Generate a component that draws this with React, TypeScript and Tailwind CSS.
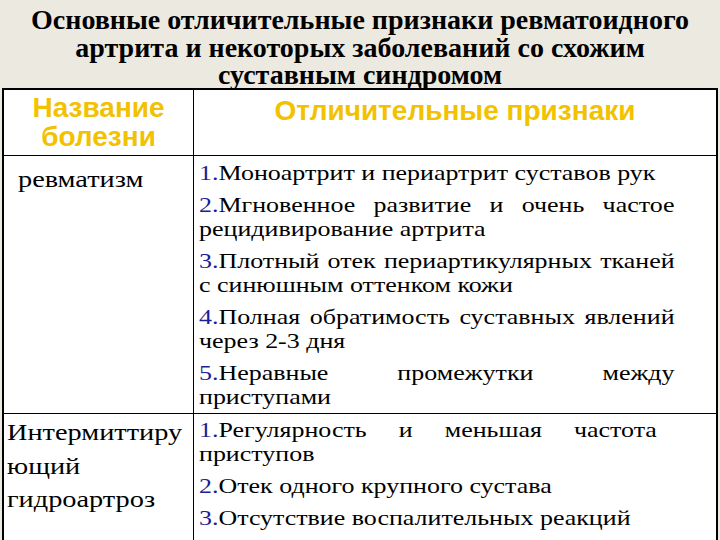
import React from 'react';

const SERIF = "'Liberation Serif', 'Times New Roman', serif";
const SANS = "'Liberation Sans', Arial, sans-serif";

export default function App() {
  return (
    <div
      className="w-[720px] h-[540px] overflow-hidden bg-[#ece9e0] text-black font-['Liberation_Serif']"
      style={{ fontFamily: SERIF }}
    >
      <div className="pt-[6px] h-[88px] text-center text-[28px] leading-[27.5px] font-bold">
        <div>Основные отличительные признаки ревматоидного</div>
        <div>артрита и некоторых заболеваний со схожим</div>
        <div>суставным синдромом</div>
      </div>

      <div className="ml-[2px] w-[716px] border-2 border-b-0 border-black bg-white">
        <div
          className="grid grid-cols-[190px_1fr] h-[66px] border-b border-black font-bold text-[#f2c200] text-[28px] leading-[29px] font-['Liberation_Sans']"
          style={{ fontFamily: SANS }}
        >
          <div className="border-r border-black pt-[3px] text-center">
            <div>Название</div>
            <div>болезни</div>
          </div>
          <div className="pt-[6px] text-center">Отличительные признаки</div>
        </div>

        <div className="grid grid-cols-[190px_1fr] border-b border-black">
          <div className="border-r border-black pl-[14px] pt-[7px] text-[24px] leading-[33px]">
            <div className="origin-left scale-x-[1.18]">ревматизм</div>
          </div>
          <div className="pl-[5px] pt-[5px] pb-[4px] text-[22px] leading-[24px]">
            <div className="w-[403px] origin-left scale-x-[1.18] flex flex-col gap-[8px]">
              <div>
                <span className="text-[#1d1d96]">1.</span>Моноартрит и периартрит суставов рук
              </div>
              <div>
                <div className="text-justify [text-align-last:justify]">
                  <span className="text-[#1d1d96]">2.</span>Мгновенное развитие и очень частое
                </div>
                <div>рецидивирование артрита</div>
              </div>
              <div>
                <div className="text-justify [text-align-last:justify]">
                  <span className="text-[#1d1d96]">3.</span>Плотный отек периартикулярных тканей
                </div>
                <div>с синюшным оттенком кожи</div>
              </div>
              <div>
                <div className="text-justify [text-align-last:justify]">
                  <span className="text-[#1d1d96]">4.</span>Полная обратимость суставных явлений
                </div>
                <div>через 2-3 дня</div>
              </div>
              <div>
                <div className="text-justify [text-align-last:justify]">
                  <span className="text-[#1d1d96]">5.</span>Неравные промежутки между
                </div>
                <div>приступами</div>
              </div>
            </div>
          </div>
        </div>

        <div className="grid grid-cols-[190px_1fr]">
          <div className="border-r border-black pl-[3px] pt-[2px] text-[24px] leading-[33.5px]">
            <div className="origin-left scale-x-[1.18]">
              <div>Интермиттиру</div>
              <div>ющий</div>
              <div>гидроартроз</div>
            </div>
          </div>
          <div className="pl-[5px] pt-[4px] text-[22px] leading-[24px]">
            <div className="w-[388px] origin-left scale-x-[1.18] flex flex-col gap-[8px]">
              <div>
                <div className="text-justify [text-align-last:justify]">
                  <span className="text-[#1d1d96]">1.</span>Регулярность и меньшая частота
                </div>
                <div>приступов</div>
              </div>
              <div>
                <span className="text-[#1d1d96]">2.</span>Отек одного крупного сустава
              </div>
              <div>
                <span className="text-[#1d1d96]">3.</span>Отсутствие воспалительных реакций
              </div>
              <div>
                <span className="text-[#1d1d96]">4.</span>Полная обратимость суставных явлений
              </div>
            </div>
          </div>
        </div>
      </div>
    </div>
  );
}
